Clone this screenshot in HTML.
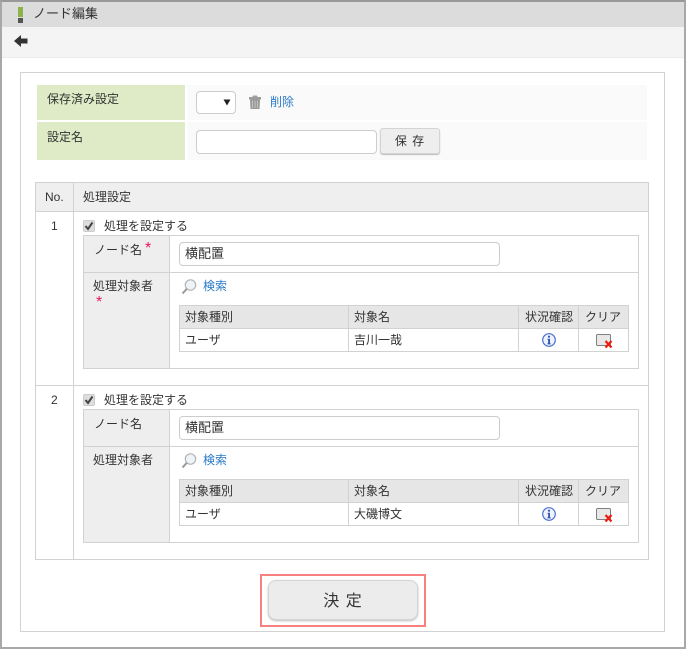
<!DOCTYPE html>
<html lang="ja"><head><meta charset="utf-8"><title>ノード編集</title>
<style>
*{box-sizing:border-box}
html,body{margin:0;padding:0;background:#fff}
body{width:686px;height:649px;position:relative;overflow:hidden;font:12px/16px "Liberation Sans","Noto Sans CJK JP",sans-serif;color:#333}
.a,.t{position:absolute}
.t{white-space:nowrap}
.b{position:absolute;background:#d2d2d2}
.in{position:absolute;background:#fff;border:1px solid #ccc;border-radius:4px;padding:0 5px;color:#333}
.link{color:#2a7ac8}
.req{color:#e8185a;font-size:16px}
</style></head><body>
<div class="a" style="left:0;top:0;width:686px;height:649px;border:2px solid #a8a8a8;border-top-color:#999"></div>
<div class="a" style="left:2px;top:2px;width:682px;height:25px;background:#dcdcdc"></div>
<div class="a" style="left:2px;top:27px;width:682px;height:31px;background:#f4f4f4;border-bottom:1px solid #ebebeb"></div>
<div class="a" style="left:18px;top:7px;width:5px;height:10px;background:#8ab44a"></div>
<div class="a" style="left:18px;top:18px;width:5px;height:5px;background:#555"></div>
<div class="t" style="left:33px;top:6px;font-size:13px">ノード編集</div>
<svg class="a" style="left:14px;top:34px" width="14" height="14" viewBox="0 0 14 14"><path d="M0 7L7 1V4.5H13.5V9.5H7V13Z" fill="#333"/></svg>

<div class="a" style="left:20px;top:72px;width:645px;height:560px;border:1px solid #d2d2d2"></div>

<div class="a" style="left:37px;top:85px;width:148px;height:35px;background:#deebc6"></div>
<div class="a" style="left:37px;top:122px;width:148px;height:38px;background:#deebc6"></div>
<div class="a" style="left:187px;top:85px;width:460px;height:35px;background:#fafafa"></div>
<div class="a" style="left:187px;top:122px;width:460px;height:38px;background:#fafafa"></div>
<div class="t" style="left:47px;top:91px">保存済み設定</div>
<div class="t" style="left:47px;top:129px">設定名</div>
<div class="in" style="left:196px;top:91px;width:40px;height:23px"></div>
<svg class="a" style="left:223px;top:99px" width="8" height="7"><path d="M0.5 0.5H7.5L4 6.5Z" fill="#222"/></svg>
<svg class="a" style="left:248px;top:95px" width="14" height="15" viewBox="0 0 14 15"><path d="M4.5 1.5Q4.5 .5 5.5 .5H8.5Q9.5 .5 9.5 1.5V2H4.5Z" fill="#a0a0a0"/><path d="M1 2H13V4.5H1Z" fill="#9c9c9c"/><path d="M2 4.5H12L11.5 14H2.5Z" fill="#999"/><path d="M4.5 5.5V13M7 5.5V13M9.5 5.5V13" stroke="#c6c6c6" stroke-width=".9"/></svg>
<div class="t link" style="left:270px;top:94px">削除</div>
<div class="in" style="left:196px;top:130px;width:181px;height:24px"></div>
<div class="a" style="left:380px;top:128px;width:60px;height:26px;background:#eee;border:1px solid #d4d4d4;border-radius:3px;box-shadow:0 1px 1px #bbb;text-align:center;line-height:25px;letter-spacing:1px">保 存</div>

<!-- main table -->
<div class="a" style="left:35px;top:182px;width:614px;height:29px;background:#efefef"></div>
<div class="a" style="left:35px;top:182px;width:614px;height:378px;border:1px solid #d2d2d2"></div>
<div class="b" style="left:35px;top:211px;width:614px;height:1px"></div>
<div class="b" style="left:35px;top:385px;width:614px;height:1px"></div>
<div class="b" style="left:73px;top:182px;width:1px;height:378px"></div>
<div class="t" style="left:45px;top:189px">No.</div>
<div class="t" style="left:83px;top:189px">処理設定</div>

<!-- row 1 -->
<div class="t" style="left:51px;top:218px">1</div>
<div class="a" style="left:83px;top:220px;width:12px;height:12px;background:#ddd;border:1px solid #ccc;border-radius:2px"></div>
<svg class="a" style="left:84px;top:221px" width="10" height="10"><path d="M1.5 5L4 8L8.5 1.5" fill="none" stroke="#444" stroke-width="2"/></svg>
<div class="t" style="left:104px;top:218px">処理を設定する</div>
<div class="a" style="left:83px;top:235px;width:556px;height:134px;border:1px solid #d2d2d2"></div>
<div class="a" style="left:84px;top:236px;width:85px;height:132px;background:#eee"></div>
<div class="b" style="left:169px;top:236px;width:1px;height:132px"></div>
<div class="b" style="left:84px;top:272px;width:554px;height:1px"></div>
<div class="t" style="left:94px;top:242px">ノード名</div>
<div class="t req" style="left:145px;top:241px">*</div>
<div class="t" style="left:93px;top:278px">処理対象者</div>
<div class="t req" style="left:96px;top:295px">*</div>
<div class="in" style="left:179px;top:242px;width:321px;height:24px;line-height:22px;font-size:13px">横配置</div>
<svg class="a" style="left:181px;top:279px" width="16" height="16" viewBox="0 0 16 16"><circle cx="9.5" cy="6" r="5.2" fill="#eef3f8" stroke="#b4b4b4" stroke-width="1.2"/><path d="M5.8 9.8L1.5 14.5" stroke="#999" stroke-width="2"/></svg>
<div class="t link" style="left:203px;top:278px">検索</div>
<div class="a" style="left:179px;top:305px;width:450px;height:47px;border:1px solid #d2d2d2"></div>
<div class="a" style="left:180px;top:306px;width:448px;height:22px;background:#e6e6e6"></div>
<div class="b" style="left:180px;top:328px;width:448px;height:1px"></div>
<div class="b" style="left:348px;top:306px;width:1px;height:45px"></div>
<div class="b" style="left:518px;top:306px;width:1px;height:45px"></div>
<div class="b" style="left:578px;top:306px;width:1px;height:45px"></div>
<div class="t" style="left:185px;top:309px">対象種別</div>
<div class="t" style="left:354px;top:309px">対象名</div>
<div class="t" style="left:525px;top:309px">状況確認</div>
<div class="t" style="left:585px;top:309px">クリア</div>
<div class="t" style="left:185px;top:332px">ユーザ</div>
<div class="t" style="left:354px;top:332px">吉川一哉</div>
<svg class="a" style="left:542px;top:333px" width="14" height="14" viewBox="0 0 14 14"><circle cx="7" cy="7" r="6.3" fill="#eef2fb" stroke="#4a6fd0" stroke-width="1.2"/><path d="M6 2.8H8V4.6H6Z M5.5 5.8H8V10.4H8.8V11.4H5.3V10.4H6.1V6.8H5.5Z" fill="#3558b8"/></svg>
<svg class="a" style="left:596px;top:334px" width="17" height="15" viewBox="0 0 17 15"><rect x=".5" y=".5" width="14" height="11" rx="1" fill="#e8e8e8" stroke="#808080"/><path d="M9.5 7L15.5 13.5M15.5 7L9.5 13.5" stroke="#ee1c10" stroke-width="2.2"/></svg>

<!-- row 2 -->
<div class="t" style="left:51px;top:392px">2</div>
<div class="a" style="left:83px;top:394px;width:12px;height:12px;background:#ddd;border:1px solid #ccc;border-radius:2px"></div>
<svg class="a" style="left:84px;top:395px" width="10" height="10"><path d="M1.5 5L4 8L8.5 1.5" fill="none" stroke="#444" stroke-width="2"/></svg>
<div class="t" style="left:104px;top:392px">処理を設定する</div>
<div class="a" style="left:83px;top:409px;width:556px;height:134px;border:1px solid #d2d2d2"></div>
<div class="a" style="left:84px;top:410px;width:85px;height:132px;background:#eee"></div>
<div class="b" style="left:169px;top:410px;width:1px;height:132px"></div>
<div class="b" style="left:84px;top:446px;width:554px;height:1px"></div>
<div class="t" style="left:94px;top:416px">ノード名</div>
<div class="t" style="left:93px;top:452px">処理対象者</div>
<div class="in" style="left:179px;top:416px;width:321px;height:24px;line-height:22px;font-size:13px">横配置</div>
<svg class="a" style="left:181px;top:453px" width="16" height="16" viewBox="0 0 16 16"><circle cx="9.5" cy="6" r="5.2" fill="#eef3f8" stroke="#b4b4b4" stroke-width="1.2"/><path d="M5.8 9.8L1.5 14.5" stroke="#999" stroke-width="2"/></svg>
<div class="t link" style="left:203px;top:452px">検索</div>
<div class="a" style="left:179px;top:479px;width:450px;height:47px;border:1px solid #d2d2d2"></div>
<div class="a" style="left:180px;top:480px;width:448px;height:22px;background:#e6e6e6"></div>
<div class="b" style="left:180px;top:502px;width:448px;height:1px"></div>
<div class="b" style="left:348px;top:480px;width:1px;height:45px"></div>
<div class="b" style="left:518px;top:480px;width:1px;height:45px"></div>
<div class="b" style="left:578px;top:480px;width:1px;height:45px"></div>
<div class="t" style="left:185px;top:483px">対象種別</div>
<div class="t" style="left:354px;top:483px">対象名</div>
<div class="t" style="left:525px;top:483px">状況確認</div>
<div class="t" style="left:585px;top:483px">クリア</div>
<div class="t" style="left:185px;top:506px">ユーザ</div>
<div class="t" style="left:354px;top:506px">大磯博文</div>
<svg class="a" style="left:542px;top:507px" width="14" height="14" viewBox="0 0 14 14"><circle cx="7" cy="7" r="6.3" fill="#eef2fb" stroke="#4a6fd0" stroke-width="1.2"/><path d="M6 2.8H8V4.6H6Z M5.5 5.8H8V10.4H8.8V11.4H5.3V10.4H6.1V6.8H5.5Z" fill="#3558b8"/></svg>
<svg class="a" style="left:596px;top:508px" width="17" height="15" viewBox="0 0 17 15"><rect x=".5" y=".5" width="14" height="11" rx="1" fill="#e8e8e8" stroke="#808080"/><path d="M9.5 7L15.5 13.5M15.5 7L9.5 13.5" stroke="#ee1c10" stroke-width="2.2"/></svg>

<!-- decide button -->
<div class="a" style="left:268px;top:580px;width:150px;height:40px;background:#ececec;border:1px solid #d4d4d4;border-radius:8px;box-shadow:0 1px 2px #bbb;text-align:center;font-size:16px;line-height:41px;letter-spacing:1px">決 定</div>
<div class="a" style="left:260px;top:574px;width:166px;height:53px;border:2px solid #f98080"></div>
</body></html>
